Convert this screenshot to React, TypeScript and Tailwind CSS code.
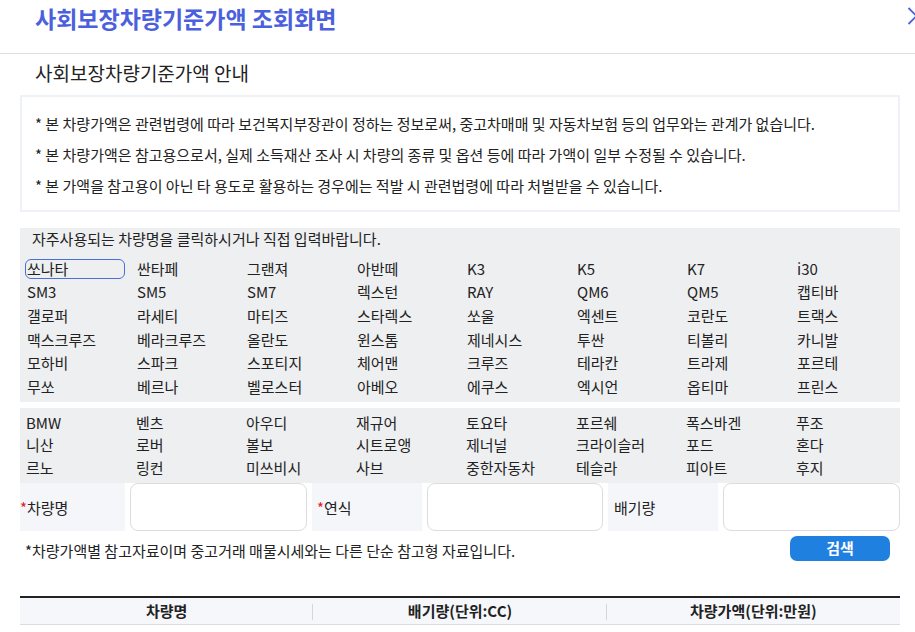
import { useState } from 'react';

const popular = [
  '쏘나타', '싼타페', '그랜져', '아반떼', 'K3', 'K5', 'K7', 'i30',
  'SM3', 'SM5', 'SM7', '렉스턴', 'RAY', 'QM6', 'QM5', '캡티바',
  '갤로퍼', '라세티', '마티즈', '스타렉스', '쏘울', '엑센트', '코란도', '트랙스',
  '맥스크루즈', '베라크루즈', '올란도', '윈스톰', '제네시스', '투싼', '티볼리', '카니발',
  '모하비', '스파크', '스포티지', '체어맨', '크루즈', '테라칸', '트라제', '포르테',
  '무쏘', '베르나', '벨로스터', '아베오', '에쿠스', '엑시언', '옵티마', '프린스',
];

const brands = [
  'BMW', '벤츠', '아우디', '재규어', '토요타', '포르쉐', '폭스바겐', '푸조',
  '니산', '로버', '볼보', '시트로앵', '제너널', '크라이슬러', '포드', '혼다',
  '르노', '링컨', '미쓰비시', '사브', '중한자동차', '테슬라', '피아트', '후지',
];

const notices = [
  '* 본 차량가액은 관련법령에 따라 보건복지부장관이 정하는 정보로써, 중고차매매 및 자동차보험 등의 업무와는 관계가 없습니다.',
  '* 본 차량가액은 참고용으로서, 실제 소득재산 조사 시 차량의 종류 및 옵션 등에 따라 가액이 일부 수정될 수 있습니다.',
  '* 본 가액을 참고용이 아닌 타 용도로 활용하는 경우에는 적발 시 관련법령에 따라 처벌받을 수 있습니다.',
];

export default function App() {
  const [car, setCar] = useState('');
  const [year, setYear] = useState('');
  const [cc, setCc] = useState('');
  const [selected, setSelected] = useState('쏘나타');

  function pick(name: string) {
    setSelected(name);
    setCar(name);
  }

  return (
    <div className="w-[915px] h-[632px] overflow-hidden bg-white text-[#222] font-['Noto_Sans_CJK_KR','Noto_Sans',sans-serif]">
      {/* header */}
      <div className="h-[54px] border-b border-[#e0e0e0] flex justify-between items-start">
        <h1 className="pl-[35px] pt-[2px] text-[23px] leading-[32px] font-bold text-[#4a60dc]">사회보장차량기준가액 조회화면</h1>
        <svg width="11" height="18" viewBox="0 0 11 18" className="mt-[7px] mr-[-3px]">
          <path d="M1.5 1 L9.5 9 L1.5 17" fill="none" stroke="#4a63dd" strokeWidth="1.8" />
        </svg>
      </div>

      <div className="pl-5 pr-[15px]">
        <h2 className="pl-[15px] mt-[6px] text-[19px] leading-[26px] text-[#222]">사회보장차량기준가액 안내</h2>

        <div className="mt-[9px] border-2 border-[#eef1f6] pl-[13px] pt-[11px] pb-[9px]">
          {notices.map(n => (
            <p key={n} className="text-[15px] leading-[31px]">{n}</p>
          ))}
        </div>

        {/* popular models */}
        <div className="mt-4 bg-[#eeeff1] pt-[1px] pb-[3px]">
          <p className="pl-3 text-[15px] leading-[20px]">자주사용되는 차량명을 클릭하시거나 직접 입력바랍니다.</p>
          <div className="mt-[8px] grid grid-cols-8">
            {popular.map(name => (
              <div key={name} className="h-[23.6px] px-[5px] flex items-center">
                <button
                  onClick={() => pick(name)}
                  className={
                    'w-full h-[20px] px-[1px] text-left text-[15px] leading-[18px] rounded-[6px] border ' +
                    (selected === name ? 'border-[#4a70d8]' : 'border-transparent')
                  }
                >
                  {name}
                </button>
              </div>
            ))}
          </div>
        </div>

        {/* brands */}
        <div className="mt-[6px] bg-[#eeeff1] pt-[3.75px] pb-[3.75px]">
          <div className="grid grid-cols-8">
            {brands.map(name => (
              <div key={name} className="h-[22.5px] pl-[6px] flex items-center">
                <button onClick={() => pick(name)} className="text-left text-[15px] leading-[18px]">{name}</button>
              </div>
            ))}
          </div>
        </div>

        {/* search form */}
        <div className="grid grid-cols-[105px_177px_110px_176px_110px_177px] gap-x-[5px] h-[48px]">
          <label className="bg-[#f5f6fa] flex items-center pt-[3px] text-[15px]">
            <span className="text-[#e02020]">*</span>차량명
          </label>
          <input value={car} onChange={e => setCar(e.target.value)} className="bg-white border border-[#dcdcdc] rounded-[8px] px-3 text-[15px] outline-none" />
          <label className="bg-[#f5f6fa] flex items-center pl-[5px] pt-[3px] text-[15px]">
            <span className="text-[#e02020]">*</span>연식
          </label>
          <input value={year} onChange={e => setYear(e.target.value)} className="bg-white border border-[#dcdcdc] rounded-[8px] px-3 text-[15px] outline-none" />
          <label className="bg-[#f5f6fa] flex items-center pl-[6px] pt-[3px] text-[15px]">배기량</label>
          <input value={cc} onChange={e => setCc(e.target.value)} className="bg-white border border-[#dcdcdc] rounded-[8px] px-3 text-[15px] outline-none" />
        </div>

        <div className="mt-[5px] pl-[5px] pr-[10px] flex justify-between items-start">
          <p className="pt-[5px] text-[15px] leading-[20px]">*차량가액별 참고자료이며 중고거래 매물시세와는 다른 단순 참고형 자료입니다.</p>
          <button className="w-[100px] h-[25px] rounded-[7px] bg-[#1f80e0] text-white text-[15px] font-bold">검색</button>
        </div>

        {/* result table */}
        <table className="mt-[35px] w-full border-t-2 border-[#222] table-fixed">
          <thead>
            <tr className="bg-[#f5f7fb] border-b border-[#dcdcdc] h-[28px]">
              <th className="text-[15px] font-bold relative">
                차량명
                <span className="absolute right-0 top-[6px] h-[16px] border-r border-[#d6d6d6]" />
              </th>
              <th className="text-[15px] font-bold relative">
                배기량(단위:CC)
                <span className="absolute right-0 top-[6px] h-[16px] border-r border-[#d6d6d6]" />
              </th>
              <th className="text-[15px] font-bold">차량가액(단위:만원)</th>
            </tr>
          </thead>
          <tbody />
        </table>
      </div>
    </div>
  );
}
